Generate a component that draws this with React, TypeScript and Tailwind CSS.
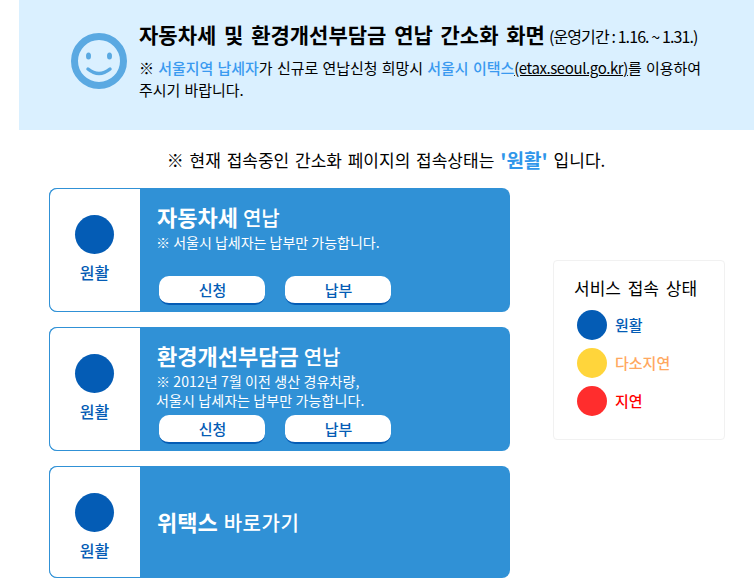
const FONT = "font-['Noto_Sans_CJK_KR','Noto_Sans',sans-serif]";

function StatusCell() {
  return (
    <div className="w-[91px] shrink-0 bg-white border border-r-0 border-[#3091d6] rounded-l-[8px] flex flex-col items-center pt-[26px] pr-[1px]">
      <div className="w-[39px] h-[39px] rounded-full bg-[#045cb5]" />
      <p className="mt-[6px] text-[16px] leading-[24px] font-medium text-[#045cb5]">원활</p>
    </div>
  );
}

function PayButtons() {
  return (
    <div className="flex gap-5 pl-[2px]">
      {['신청', '납부'].map((label) => (
        <button
          key={label}
          className="w-[106px] h-[29px] pl-[1px] rounded-[10px] bg-white border-b-2 border-[#045cb5] text-[15px] leading-[26px] font-medium text-[#045cb5]"
        >
          {label}
        </button>
      ))}
    </div>
  );
}

function Legend({ color, text, label }: { color: string; text: string; label: string }) {
  return (
    <div className="flex items-center h-[38px]">
      <div className={`w-[30px] h-[30px] rounded-full ${color}`} />
      <span className={`ml-2 text-[15px] font-medium ${text}`}>{label}</span>
    </div>
  );
}

export default function App() {
  return (
    <div className={`w-[754px] h-[585px] overflow-hidden bg-white text-black ${FONT}`}>
      <div className="ml-[19px] h-[130px] bg-[#daf0ff] flex pl-[52px]">
        <svg className="mt-[33px] shrink-0" width="56" height="56" viewBox="0 0 56 56">
          <circle cx="28" cy="28" r="24.5" fill="none" stroke="#5aa9e2" strokeWidth="7" />
          <ellipse cx="17.5" cy="23" rx="2.5" ry="3.5" fill="#5aa9e2" />
          <ellipse cx="38.5" cy="23" rx="2.5" ry="3.5" fill="#5aa9e2" />
          <path d="M17 36 Q28 45 39 36" fill="none" stroke="#5aa9e2" strokeWidth="3.5" strokeLinecap="round" />
        </svg>
        <div className="ml-3 pt-[19px] w-[580px]">
          <h1 className="text-[21px] leading-[30px] font-bold whitespace-nowrap [word-spacing:3px]">
            자동차세 및 환경개선부담금 연납 간소화 화면
            <span className="ml-1 text-[16px] font-normal tracking-[-0.9px] [word-spacing:0px]">(운영기간 : 1.16. ~ 1.31.)</span>
          </h1>
          <p className="mt-[6px] text-[15px] leading-[22px] whitespace-nowrap [word-spacing:1px] tracking-[-0.05px]">
            ※ <b className="font-medium text-[#3a9af0]">서울지역 납세자</b>가 신규로 연납신청 희망시{' '}
            <b className="font-medium text-[#3a9af0]">서울시 이택스</b>
            <span className="underline tracking-[-0.4px]">(etax.seoul.go.kr)</span>를 이용하여
            <br />
            주시기 바랍니다.
          </p>
        </div>
      </div>

      <p className="h-[58px] pt-[2px] pl-[18px] flex items-center justify-center gap-[6px] text-[17px] [word-spacing:2px]">
        ※ 현재 접속중인 간소화 페이지의 접속상태는
        <b className="text-[19px] font-bold text-[#2f96ea]">'원활'</b>
        입니다.
      </p>

      <div className="flex">
        <div className="ml-[49px] w-[461px] flex flex-col gap-[15px]">
          <div className="h-[124px] flex rounded-[8px] bg-[#3091d6]">
            <StatusCell />
            <div className="flex-1 pl-[17px] pt-[13px] text-white">
              <h2 className="text-[22px] leading-[30px] font-bold whitespace-nowrap">
                자동차세 <span className="text-[20px] font-medium">연납</span>
              </h2>
              <p className="text-[14px] leading-[20px] -mt-[1px] -ml-[1px]">※ 서울시 납세자는 납부만 가능합니다.</p>
              <div className="mt-[24px]"><PayButtons /></div>
            </div>
          </div>

          <div className="h-[124px] flex rounded-[8px] bg-[#3091d6]">
            <StatusCell />
            <div className="flex-1 pl-[17px] pt-[13px] text-white">
              <h2 className="text-[22px] leading-[30px] font-bold whitespace-nowrap">
                환경개선부담금 <span className="text-[20px] font-medium">연납</span>
              </h2>
              <p className="text-[14px] leading-[19px] tracking-[0.1px] -ml-[1px]">
                ※ 2012년 7월 이전 생산 경유차량,<br />서울시 납세자는 납부만 가능합니다.
              </p>
              <div className="mt-[5px]"><PayButtons /></div>
            </div>
          </div>

          <div className="h-[112px] flex rounded-[8px] bg-[#3091d6]">
            <StatusCell />
            <div className="flex-1 pl-[17px] flex items-center text-white">
              <h2 className="text-[22px] leading-[30px] font-bold whitespace-nowrap [word-spacing:1px]">
                위택스 <span className="text-[20px] font-medium tracking-[0.5px]">바로가기</span>
              </h2>
            </div>
          </div>
        </div>

        <div className="ml-[43px] mt-[72px] w-[172px] h-[180px] rounded-[4px] border border-[#f1f1f1] bg-white pl-[20px] pt-[15px]">
          <p className="text-[17px] leading-[24px] mb-[6px] whitespace-nowrap [word-spacing:3px]">서비스 접속 상태</p>
          <div className="pl-[3px]">
            <Legend color="bg-[#045cb5]" text="text-[#045cb5]" label="원활" />
            <Legend color="bg-[#ffd53b]" text="text-[#ffa860]" label="다소지연" />
            <Legend color="bg-[#ff2d2d]" text="text-[#ff0000]" label="지연" />
          </div>
        </div>
      </div>
    </div>
  );
}
